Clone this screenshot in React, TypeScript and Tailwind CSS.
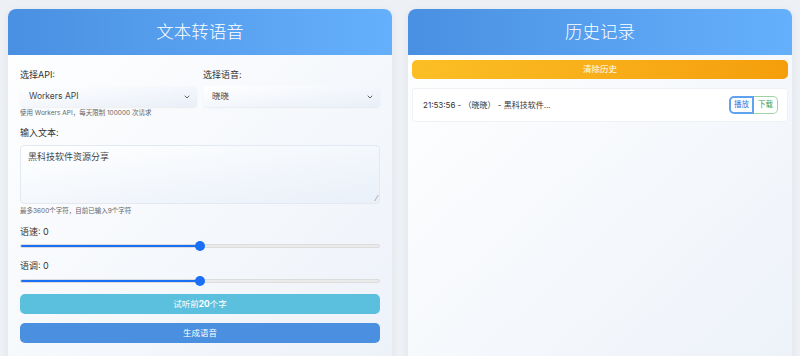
import React from 'react'
import { ChevronDown } from 'lucide-react'

const font = { fontFamily: 'Inter, "Noto Sans CJK SC", sans-serif' }

function Select({ value }: { value: string }) {
  return (
    <div className="flex h-[21px] items-center justify-between rounded-[4px] bg-gradient-to-br from-white to-[#e9eff8] pl-[9px] pr-[6px] text-[8.5px] text-[#444] shadow-[0_1px_2px_rgba(0,0,0,0.06)]">
      <span>{value}</span>
      <ChevronDown className="h-[8px] w-[8px] text-[#444]" strokeWidth={2.5} />
    </div>
  )
}

function Slider() {
  return (
    <div className="relative flex h-[10px] items-center">
      <div className="flex h-[4px] w-full overflow-hidden rounded-full border border-[#dcdcdc] bg-[#ebebeb]">
        <div className="h-full w-1/2 bg-[#1a6ff5]" />
      </div>
      <div className="absolute left-1/2 top-0 h-[10px] w-[10px] -translate-x-1/2 rounded-full bg-[#1a6ff5]" />
    </div>
  )
}

export default function App() {
  return (
    <div className="h-[356px] overflow-hidden bg-[#edf1f6] px-2 pt-[9px]" style={font}>
      <div className="grid grid-cols-2 gap-4">
        <div className="h-[360px] overflow-hidden rounded-[8px] bg-gradient-to-br from-white to-[#edf2f9] shadow-[0_2px_8px_rgba(0,0,0,0.06)]">
          <div className="flex h-[46px] items-center justify-center bg-gradient-to-r from-[#4a90e2] to-[#65b0fc] text-[17.5px] font-light text-white">
            文本转语音
          </div>
          <div className="px-3 pt-[14px] text-[#333]">
            <div className="grid grid-cols-2 gap-[6px]">
              <div>
                <div className="mb-[5px] h-[12px] text-[9px] leading-[12px]">选择API:</div>
                <Select value="Workers API" />
              </div>
              <div>
                <div className="mb-[5px] h-[12px] text-[9px] leading-[12px]">选择语音:</div>
                <Select value="晓晓" />
              </div>
            </div>
            <div className="mt-[2px] text-[6.5px] leading-[8px] text-[#666]">使用 Workers API，每天限制 100000 次请求</div>
            <div className="mt-[10px] mb-[6px] text-[9px] leading-[12px]">输入文本:</div>
            <div className="relative h-[59px] rounded-[4px] border border-[#e3e9f2] bg-gradient-to-br from-white to-[#e9f0f9] px-[7px] py-[5px] text-[9px] leading-[12px] text-[#444]">
              黑科技软件资源分享
              <span className="absolute bottom-[1px] right-[2px] text-[7px] leading-none text-[#888]">⁄</span>
            </div>
            <div className="mt-[3px] text-[6.5px] leading-[8px] text-[#666]">最多3600个字符，目前已输入9个字符</div>
            <div className="mt-[11px] text-[9px] leading-[12px]">语速: 0</div>
            <div className="mt-[3px]">
              <Slider />
            </div>
            <div className="mt-[9px] text-[9px] leading-[12px]">语调: 0</div>
            <div className="mt-[4px]">
              <Slider />
            </div>
            <div className="mt-[8px] flex h-[20px] items-center justify-center rounded-[5px] bg-[#5bc0de] text-[8.5px] text-white">
              试听前<b>20</b>个字
            </div>
            <div className="mt-[9px] flex h-[20px] items-center justify-center rounded-[5px] bg-[#4a8fe0] text-[8.5px] text-white">
              生成语音
            </div>
          </div>
        </div>

        <div className="h-[360px] overflow-hidden rounded-[8px] bg-gradient-to-br from-white to-[#edf2f9] shadow-[0_2px_8px_rgba(0,0,0,0.06)]">
          <div className="flex h-[46px] items-center justify-center bg-gradient-to-r from-[#4a90e2] to-[#65b0fc] text-[17.5px] font-light text-white">
            历史记录
          </div>
          <div className="px-[4px] pt-[5px]">
            <div className="flex h-[19px] items-center justify-center rounded-[5px] bg-gradient-to-r from-[#fbbf24] to-[#f59e0b] text-[8.5px] text-white">
              清除历史
            </div>
            <div className="mt-[9px] flex h-[34px] items-center justify-between rounded-[3px] border border-[#eef1f5] bg-white pl-[10px] pr-[9px] text-[8px] text-[#333]">
              <span>21:53:56 - （晓晓） - 黑科技软件...</span>
              <div className="flex items-center">
                <div className="flex h-[18px] w-[25px] items-center justify-center rounded-l-[5px] border-2 border-[#5fa3f0] text-[7.5px] text-[#2f7de0]">
                  播放
                </div>
                <div className="flex h-[18px] w-[24px] items-center justify-center rounded-r-[5px] border border-l-0 border-[#9ed4a5] text-[7.5px] text-[#3aa04a]">
                  下载
                </div>
              </div>
            </div>
          </div>
        </div>
      </div>
    </div>
  )
}
